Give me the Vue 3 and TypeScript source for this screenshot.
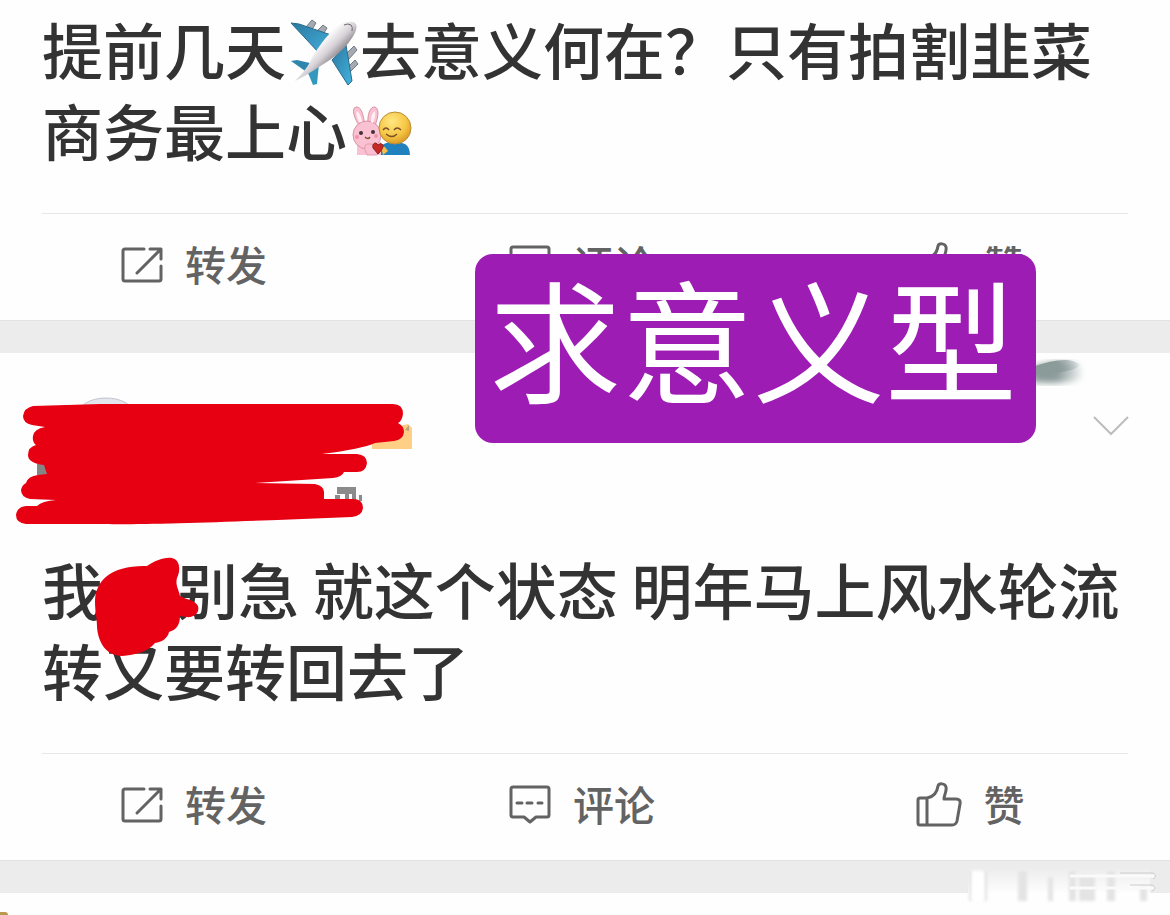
<script setup lang="ts">
interface Action {
  id: 'share' | 'comment' | 'like'
  label: string
}

const actions: Action[] = [
  { id: 'share', label: '转发' },
  { id: 'comment', label: '评论' },
  { id: 'like', label: '赞' },
]

const posts = [1, 2]
</script>

<template>
  <main class="page">
    <article v-for="post in posts" :key="post" class="post">
      <header v-if="post === 2" class="post-head">
        <svg class="scribble" viewBox="0 390 440 140" aria-hidden="true">
          <ellipse cx="106" cy="413" rx="27" ry="15" fill="#e4e6ee" stroke="#c3c5cd" stroke-width="1" />
          <path d="M372 449V432L408 424L412 428V449Z" fill="#ffcf85" />
          <path d="M405 430l4-5v6z" fill="#b9a27c" />
          <path d="M37 464h12v11h-12z" fill="#858585" />
          <path d="M337 487h19v7h-19zM335 495h5v6h-5zM345 493h4v8h-4zM352 493h4v8h-4zM359 495h3v6h-3z" fill="#8b8b8b" />
          <path
            fill="#e60012"
            d="M33 406L100 404H393Q403 404 403 414Q402 421 398 423Q404 426 404 432Q403 440 394 441L375 443Q362 449 322 454H357Q367 455 367 463Q366 472 357 472H344Q342 477 333 478L255 483L315 484Q324 486 324 492V499H353Q363 499 363 508Q362 516 352 517C250 521 150 525 100 524H26Q16 523 16 515Q17 507 26 506H37Q42 501 56 500L30 499Q21 497 21 490Q22 485 26 483Q28 476 38 475L47 474L44 465Q28 463 28 455Q28 447 36 445Q32 442 33 436Q34 429 45 427L32 425Q23 423 23 416Q24 408 33 406Z"
          />
        </svg>
        <button class="more" type="button" aria-label="更多">
          <svg width="38" height="22" viewBox="0 0 38 22" aria-hidden="true">
            <path d="M2 2L19 19L36 2" fill="none" stroke="#bdbdbd" stroke-width="2" />
          </svg>
        </button>
      </header>

      <p v-if="post === 1" class="text">
        提前几天<svg class="emoji" viewBox="0 0 74 68" aria-hidden="true">
          <defs>
            <linearGradient id="wing" x1="0" y1="0" x2="1" y2="1">
              <stop offset="0" stop-color="#2c789f" />
              <stop offset="1" stop-color="#43b3df" />
            </linearGradient>
            <linearGradient id="hull" gradientUnits="userSpaceOnUse" x1="36" y1="22" x2="52" y2="38">
              <stop offset="0.1" stop-color="#f8f6f7" />
              <stop offset="0.55" stop-color="#d5d0d5" />
              <stop offset="1" stop-color="#8b858c" />
            </linearGradient>
          </defs>
          <g fill="#a5aab0" stroke="#707a84" stroke-width="1">
            <path d="M20 9l6-7 4 3-5 8zM31 13l6-6 4 3-5 8zM59 37l9-9 3 4-9 10zM61 50l8-8 3 4-9 9z" />
          </g>
          <path d="M5 5L13 6L48 18L34 36Z" fill="url(#wing)" stroke="#286b8d" stroke-width="1" />
          <path d="M46 42L60 27L66 63L62 67Z" fill="url(#wing)" stroke="#286b8d" stroke-width="1" />
          <path d="M5 43L11 42L28 46L22 55Z" fill="#2f86ac" />
          <path d="M22 55L33 46L31 66L27 67Z" fill="#3498be" />
          <path d="M62 4C72 2 73 10 66 20C57 34 44 42 33 49C25 54 16 60 9 63C15 57 21 50 24 44C29 33 41 16 52 8Q57 4 62 4Z" fill="url(#hull)" />
          <path d="M58 7Q62 5 65 7Q67 9 66 13" fill="none" stroke="#6d6970" stroke-width="1" />
        </svg>去意义何在？只有拍割韭菜<br />商务最上心<svg class="emoji" viewBox="0 0 74 68" aria-hidden="true">
          <defs>
            <radialGradient id="face" cx="0.4" cy="0.3" r="0.75">
              <stop offset="0" stop-color="#ffe782" />
              <stop offset="0.6" stop-color="#f6c744" />
              <stop offset="1" stop-color="#d89322" />
            </radialGradient>
          </defs>
          <g fill="#f9c1d1" stroke="#d894a9" stroke-width="1">
            <path d="M13 28C7 19 4 9 9 8C15 7 17 19 18 28Z" />
            <path d="M21 27C20 16 23 7 28 8C33 10 31 20 27 29Z" />
            <path d="M10 56V43H34V56Z" stroke="none" />
            <circle cx="20" cy="36" r="14" />
          </g>
          <path d="M12 23Q8 15 10 12Q14 15 15 23ZM24 23Q24 14 28 12Q29 17 26 24Z" fill="#fff0f3" />
          <path d="M34 56V47Q44 39 58 45Q63 48 63 56Z" fill="#2181be" />
          <circle cx="48" cy="29" r="16" fill="url(#face)" stroke="#b88c36" stroke-width="1" />
          <g fill="#433037"><circle cx="14" cy="34" r="2" /><circle cx="26" cy="33" r="2" /></g>
          <g fill="#f293aa"><circle cx="10" cy="38" r="2" /><circle cx="29" cy="37" r="2" /></g>
          <g fill="none" stroke="#79502a" stroke-width="1.5">
            <path d="M18 38q3 3 5 0M36 31q3-4 6 0M47 31q3-4 7 0M39 35q6 5 11 0" />
          </g>
          <path d="M18 51q-2-7 6-6l8 2q4 5-2 9H20z" fill="#f9bfd0" stroke="#e29db1" stroke-width="1" />
          <path d="M35 52q-1-6 3-4l3 4-5 4z" fill="#f4bd4a" />
          <path d="M31 55L26 49Q25 44 29 44L31 46Q34 43 36 46Q37 49 31 55Z" fill="#c62826" stroke="#8b2324" stroke-width="1" />
        </svg>
      </p>
      <p v-else class="text">
        我<span class="hidden-name"></span>别急 就这个状态 明年马上风水轮流<br />转又要转回去了
        <svg class="blot" viewBox="92 555 110 104" aria-hidden="true">
          <path
            fill="#e60012"
            d="M95 602C95 580 112 565 147 566C155 561 163 557 172 558C180 560 181 570 177 578C175 585 179 590 180 596C187 600 195 600 198 606C200 613 194 618 186 617L180 616C180 625 176 630 169 632C168 638 162 642 155 643C148 652 135 655 122 656C106 656 98 642 97 627C97 617 95 612 95 602Z"
          />
        </svg>
      </p>

      <footer class="actions">
        <button v-for="action in actions" :key="action.id" class="action" type="button">
          <svg v-if="action.id === 'share'" width="42" height="36" viewBox="0 0 42 36" class="icon" aria-hidden="true">
            <path d="M23 2H4Q2 2 2 4V32Q2 34 4 34H38Q40 34 40 32V19M29 2H40V12M39 3L16 26" />
          </svg>
          <svg v-else-if="action.id === 'comment'" width="42" height="40" viewBox="0 0 42 40" class="icon" aria-hidden="true">
            <path d="M4 2H38Q40 2 40 4V30Q40 32 38 32H27L21 37L15 32H4Q2 32 2 30V4Q2 2 4 2ZM8 18H13M18 18H23M29 18H33" />
          </svg>
          <svg v-else width="46" height="46" viewBox="0 0 46 46" class="icon" aria-hidden="true">
            <path d="M11 16H4Q2 16 2 18V41Q2 43 4 43H36Q40 43 41 39L44 22Q45 17 40 17H28C28 13 31 9 30 5C29 1 23 1 22 4C21 11 18 15 11 16ZM11 16V43" />
          </svg>
          <span class="label">{{ action.label }}</span>
        </button>
      </footer>
    </article>

    <section class="next">
      <span class="next-avatar"></span>
    </section>

    <svg class="smudge" viewBox="0 0 70 50" aria-hidden="true">
      <defs>
        <linearGradient id="fade" x1="0" y1="0" x2="1" y2="0">
          <stop offset="0.5" stop-color="#8b9b9a" />
          <stop offset="1" stop-color="#8b9b9a" stop-opacity="0.1" />
        </linearGradient>
        <filter id="soft"><feGaussianBlur stdDeviation="3" /></filter>
      </defs>
      <path d="M0 14Q20 8 38 9Q48 10 50 16V26Q30 32 0 29Z" fill="url(#fade)" filter="url(#soft)" />
      <path d="M0 14Q22 6 36 7Q44 8 48 12Q42 20 0 22Z" fill="url(#fade)" />
    </svg>

    <h1 class="banner">求意义型</h1>

    <svg class="watermark" viewBox="0 0 210 44" aria-hidden="true">
      <defs>
        <linearGradient id="veil" x1="0" y1="0" x2="0" y2="1">
          <stop offset="0" stop-color="#ffffff" stop-opacity="0" />
          <stop offset="1" stop-color="#ffffff" />
        </linearGradient>
        <filter id="mist"><feGaussianBlur stdDeviation="1.5" /></filter>
      </defs>
      <path d="M8 4H190V32H8Z" fill="url(#veil)" />
      <g fill="#e4e4e4" filter="url(#mist)">
        <path d="M9 8h3v30h-3zM24 8h3v30h-3zM58 8h9v30h-9zM88 14h5v24h-5zM109 8h7v30h-7zM119 12h16v26h-16zM147 8h8v30h-8zM180 24h7v14h-7z" />
      </g>
      <path d="M12 8h12v29h-12z" fill="#ffffff" filter="url(#mist)" />
      <path d="M110 13H195M110 25H195" fill="none" stroke="#fafafa" stroke-width="3" />
      <path d="M160 10H193Q198 13 193 16M170 22H192Q198 25 192 28" fill="none" stroke="#cccccc" stroke-width="1" />
    </svg>
  </main>
</template>

<style>
body {
  margin: 0;
  overflow: hidden;
}
</style>

<style scoped>
.page {
  position: relative;
  display: flex;
  flex-direction: column;
  min-height: 100vh;
  overflow: hidden;
  background: #fefefe;
  color: #333333;
  font-family: "Noto Sans CJK SC", "Liberation Sans", sans-serif;
}

.post {
  border-bottom: 32px solid #ececec;
  box-shadow: inset 0 -1px #e2e2e2;
}

.post:first-child {
  padding-top: 8px;
}

.post-head {
  display: flex;
  align-items: flex-start;
  padding: 37px 40px 18px 0;
}

.scribble {
  width: 440px;
  height: 140px;
}

.more {
  display: flex;
  margin: 25px 0 0 auto;
  padding: 0;
  border: 0;
  background: none;
}

.text {
  position: relative;
  margin: 0 42px;
  padding-bottom: 43px;
  border-bottom: 1px solid #e8e8e8;
  font-size: 61px;
  font-weight: 500;
  line-height: 81px;
  white-space: nowrap;
}

.emoji {
  width: 74px;
  height: 68px;
  vertical-align: -11px;
}

.hidden-name {
  display: inline-block;
  width: 74px;
}

.blot {
  position: absolute;
  left: 50px;
  top: 7px;
  width: 110px;
  height: 104px;
}

.actions {
  display: grid;
  grid-template-columns: repeat(3, 1fr);
  padding: 0 6px 5px 0;
}

.action {
  display: flex;
  align-items: center;
  justify-content: center;
  gap: 22px;
  height: 102px;
  padding: 0;
  border: 0;
  background: none;
  color: #636363;
  font: inherit;
  font-size: 41px;
  font-weight: 500;
  line-height: 60px;
}

.label {
  padding-bottom: 5px;
}

.icon {
  fill: none;
  stroke: #636363;
  stroke-width: 3;
  stroke-linecap: round;
  stroke-linejoin: round;
}

.next {
  display: flex;
  flex: 1;
  align-items: flex-end;
}

.next-avatar {
  width: 8px;
  height: 3px;
  border-top-right-radius: 8px;
  background: #b99a4c;
}

.banner {
  position: absolute;
  left: 475px;
  top: 254px;
  margin: 0;
  padding: 0 19px 26px 14px;
  border-radius: 18px;
  background: #9c1cb4;
  color: #ffffff;
  font-size: 132px;
  font-weight: 400;
  line-height: 163px;
  white-space: nowrap;
}

.smudge {
  position: absolute;
  left: 1032px;
  top: 353px;
  width: 70px;
  height: 50px;
}

.watermark {
  position: absolute;
  right: 0;
  bottom: 8px;
  width: 210px;
  height: 44px;
}
</style>
